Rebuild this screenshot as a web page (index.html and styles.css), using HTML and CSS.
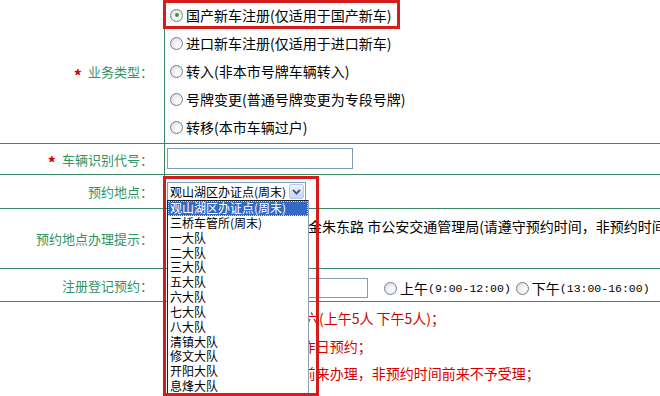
FILE: index.html
```html
<!DOCTYPE html>
<html lang="zh-CN">
<head>
<meta charset="utf-8">
<title>机动车业务预约</title>
<link rel="stylesheet" href="styles.css">
</head>
<body>
<div class="page">
  <div class="form">
    <div class="lbl"><span class="req">*</span>业务类型：</div>
    <div class="val types">
      <label class="opt"><span class="radio on"></span>国产新车注册(仅适用于国产新车)</label>
      <label class="opt"><span class="radio"></span>进口新车注册(仅适用于进口新车)</label>
      <label class="opt"><span class="radio"></span>转入(非本市号牌车辆转入)</label>
      <label class="opt"><span class="radio"></span>号牌变更(普通号牌变更为专段号牌)</label>
      <label class="opt"><span class="radio"></span>转移(本市车辆过户)</label>
    </div>

    <div class="lbl"><span class="req">*</span>车辆识别代号：</div>
    <div class="val vin"><input class="textbox vin-input" type="text"></div>

    <div class="lbl">预约地点：</div>
    <div class="val loc">
      <div class="select">
        <span class="sel-text">观山湖区办证点(周末)</span>
        <span class="sel-btn"><svg width="9" height="6" viewBox="0 0 9 6"><path d="M1 1 L4.5 4.5 L8 1" fill="none" stroke="#4a5f86" stroke-width="2"/></svg></span>
        <ul class="listbox">
          <li class="sel">观山湖区办证点(周末)</li>
          <li>三桥车管所(周末)</li>
          <li>一大队</li>
          <li>二大队</li>
          <li>三大队</li>
          <li>五大队</li>
          <li>六大队</li>
          <li>七大队</li>
          <li>八大队</li>
          <li>清镇大队</li>
          <li>修文大队</li>
          <li>开阳大队</li>
          <li>息烽大队</li>
        </ul>
      </div>
    </div>

    <div class="lbl">预约地点办理提示：</div>
    <div class="val tip">地址：贵阳市观山湖区金朱东路 市公安交通管理局(请遵守预约时间，非预约时间前来不予受理)</div>

    <div class="lbl">注册登记预约：</div>
    <div class="val reg">
      <input class="textbox date-input" type="text">
      <label class="opt2 first"><span class="radio"></span>上午<span class="num">(9:00-12:00)</span></label>
      <label class="opt2"><span class="radio"></span>下午<span class="num">(13:00-16:00)</span></label>
    </div>

    <div class="lbl blank"></div>
    <div class="val notes">
      <p>1、每天名额 周一至周六(上午5人 下午5人)；</p>
      <p>2、周末须提前一个工作日预约；</p>
      <p>3、请按预约时间准时前来办理，非预约时间前来不予受理；</p>
    </div>
  </div>

  <div class="hl hl-type"></div>
  <div class="hl hl-loc"></div>
</div>
</body>
</html>
```

FILE: styles.css
```css
* { box-sizing: border-box; }

html, body {
  margin: 0;
  padding: 0;
  overflow: hidden;
  background: #fff;
}

body {
  font-family: "Noto Sans CJK SC", "Noto Sans", sans-serif;
  font-size: 14px;
  color: #000;
}

.page {
  position: relative;
  width: 900px;
  height: 396px;
  overflow: hidden;
}

.form {
  display: grid;
  grid-template-columns: 165px 1fr;
}

.lbl {
  display: flex;
  align-items: center;
  justify-content: flex-end;
  padding-right: 11px;
  font-size: 13px;
  color: #2f9464;
  white-space: nowrap;
  border-right: 1px solid #3a8865;
  border-bottom: 1px solid #3a8865;
}

.lbl.blank { border-bottom: none; }

.req {
  color: #d40000;
  font-size: 16px;
  font-weight: bold;
  margin-right: 6px;
  position: relative;
  top: 3px;
}

.val {
  border-bottom: 1px solid #3a8865;
  padding-left: 2px;
}

/* business type radios */
.types { padding: 1px 0 2px 5px; }

.opt {
  display: flex;
  align-items: center;
  height: 28px;
  white-space: nowrap;
}

.radio {
  flex: none;
  position: relative;
  width: 13px;
  height: 13px;
  margin-right: 3px;
  border-radius: 50%;
  border: 1px solid #6f7f8f;
  background: radial-gradient(circle at 65% 65%, #ffffff 0, #f4f4f4 35%, #d2d7dc 100%);
}

.radio.on::after {
  content: "";
  position: absolute;
  left: 3.5px;
  top: 3.5px;
  width: 4px;
  height: 4px;
  border-radius: 50%;
  background: #27a027;
}

/* text inputs */
.textbox {
  display: block;
  margin: 0;
  padding: 0;
  border: 1px solid #7f9db9;
  background: #fff;
  outline: none;
}

.vin { padding: 4px 0 5px 2px; }
.vin-input { width: 186px; height: 21px; }

/* select */
.loc { padding: 7px 0 7px 2px; }

.select {
  position: relative;
  display: flex;
  align-items: center;
  width: 139px;
  height: 19px;
  border: 1px solid #7f9db9;
  background: #fff;
  font-size: 12px;
}

.sel-text {
  flex: 1;
  padding-left: 2px;
  white-space: nowrap;
  overflow: hidden;
  line-height: 17px;
}

.sel-btn {
  flex: none;
  display: flex;
  align-items: center;
  justify-content: center;
  width: 15px;
  height: 15px;
  margin-right: 1px;
  border: 1px solid #b7c9ee;
  border-radius: 2px;
  background: linear-gradient(#eef3fd, #c6d6f8);
}

.listbox {
  position: absolute;
  left: -1px;
  top: 17px;
  z-index: 2;
  width: 142px;
  margin: 0;
  padding: 0;
  list-style: none;
  background: #fff;
  border: 1px solid #222;
  border-right-color: #8ea0b4;
}

.listbox li {
  height: 14.85px;
  line-height: 14.85px;
  padding-left: 2px;
  white-space: nowrap;
}

.listbox li.sel {
  background: #316ac5;
  color: #fff;
  outline: 1px dotted #c8d6f0;
  outline-offset: -1px;
}

/* tip row */
.tip {
  height: 60px;
  padding: 7px 0 0 3px;
  line-height: 20px;
  white-space: nowrap;
}

/* registration row */
.reg {
  display: flex;
  align-items: center;
  padding: 9px 0 3px 2px;
}

.date-input { width: 201px; height: 20px; }

.opt2 {
  display: flex;
  align-items: center;
  margin-left: 5px;
  white-space: nowrap;
}

.opt2.first { margin-left: 16px; }

.num {
  font-family: "Liberation Mono", monospace;
  font-size: 11.5px;
}

/* notes */
.notes {
  border-bottom: none;
  padding: 3px 0 0 3px;
  color: #d40000;
  line-height: 27.5px;
  white-space: nowrap;
}

.notes p { margin: 0; }

/* highlight overlays */
.hl {
  position: absolute;
  z-index: 3;
  border: 3px solid #d41c1c;
}

.hl-type { left: 163px; top: 0; width: 237px; height: 29px; }
.hl-loc { left: 163px; top: 176px; width: 156px; height: 220px; }
```
